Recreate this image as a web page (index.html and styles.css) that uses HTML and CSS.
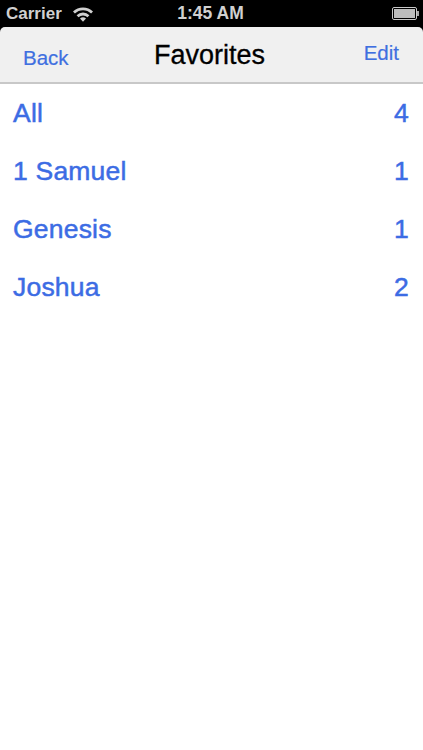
FILE: index.html
```html
<!DOCTYPE html>
<html lang="en">

<head>
    <meta charset="UTF-8">
    <meta name="viewport" content="width=device-width, initial-scale=1.0">
    <title>Favorites</title>
    <link rel="stylesheet" href="styles.css">
</head>

<body>
    <div class="statusBar">
        <div class="statusLeft">
            <span>Carrier</span>
            <svg class="wifi" width="22" height="16" viewBox="0 0 22 16">
                <path d="M1 5.6a14.2 14.2 0 0 1 20 0l-1.9 2a11.5 11.5 0 0 0-16.2 0z" fill="#d0d0d0"/>
                <path d="M4.6 9.2a9.2 9.2 0 0 1 12.8 0l-1.9 2a6.5 6.5 0 0 0-9 0z" fill="#d0d0d0"/>
                <path d="M8 12.6a4.3 4.3 0 0 1 6 0L11 15.8z" fill="#d0d0d0"/>
            </svg>
        </div>
        <div class="statusTime">1:45 AM</div>
        <div class="battery">
            <div class="batteryBody"><div class="batteryFill"></div></div>
            <div class="batteryTip"></div>
        </div>
    </div>

    <div class="navBar">
        <span class="navBtn navBack">Back</span>
        <span class="navTitle">Favorites</span>
        <span class="navBtn navEdit">Edit</span>
    </div>

    <ul class="favList">
        <li><span>All</span><span>4</span></li>
        <li><span>1 Samuel</span><span>1</span></li>
        <li><span>Genesis</span><span>1</span></li>
        <li><span>Joshua</span><span>2</span></li>
    </ul>
</body>

</html>
```

FILE: styles.css
```css
html,
body {
    margin: 0;
    padding: 0;
    height: 750px;
    overflow: hidden;
    background: #000;
    font-family: "Liberation Sans", Arial, sans-serif;
}

.statusBar {
    height: 27px;
    padding: 0 4px 0 6px;
    display: flex;
    align-items: center;
    justify-content: space-between;
    background: #000;
    color: #d0d0d0;
    font-size: 17px;
    font-weight: bold;
    position: relative;
}

.statusLeft {
    display: flex;
    align-items: center;
    gap: 10px;
}

.wifi {
    display: block;
}

.statusTime {
    position: absolute;
    left: 0;
    right: 2px;
    text-align: center;
    font-size: 17.5px;
}

.battery {
    display: flex;
    align-items: center;
}

.batteryBody {
    width: 25px;
    height: 13px;
    padding: 1px;
    border: 1px solid #c8c8c8;
    border-radius: 2px;
    box-sizing: border-box;
}

.batteryFill {
    height: 100%;
    background: #bdbdbd;
}

.batteryTip {
    width: 2px;
    height: 5px;
    background: #a8a8a8;
}

.navBar {
    height: 57px;
    box-sizing: border-box;
    padding: 0 24px 0 23px;
    display: flex;
    align-items: center;
    justify-content: space-between;
    background: #f0f0f0;
    border-bottom: 2px solid #c8c8c8;
    border-radius: 5px 5px 0 0;
    position: relative;
}

.navBtn {
    font-size: 20.5px;
    color: #3f6fe0;
    -webkit-text-stroke: 0.2px #3f6fe0;
}

.navBack {
    margin-top: 6px;
}

.navEdit {
    margin-top: -3px;
}

.navTitle {
    position: absolute;
    left: 0;
    right: 4px;
    padding-top: 2px;
    text-align: center;
    font-size: 27px;
    color: #000;
    -webkit-text-stroke: 0.3px #000;
    pointer-events: none;
}

.favList {
    margin: 0;
    padding: 0;
    list-style: none;
    background: #fff;
    height: 666px;
}

.favList li {
    height: 58px;
    padding: 0 14px 0 13px;
    display: flex;
    align-items: center;
    justify-content: space-between;
    font-size: 26.5px;
    letter-spacing: 0.2px;
    color: #3c6ce4;
    -webkit-text-stroke: 0.5px #3c6ce4;
}
```
